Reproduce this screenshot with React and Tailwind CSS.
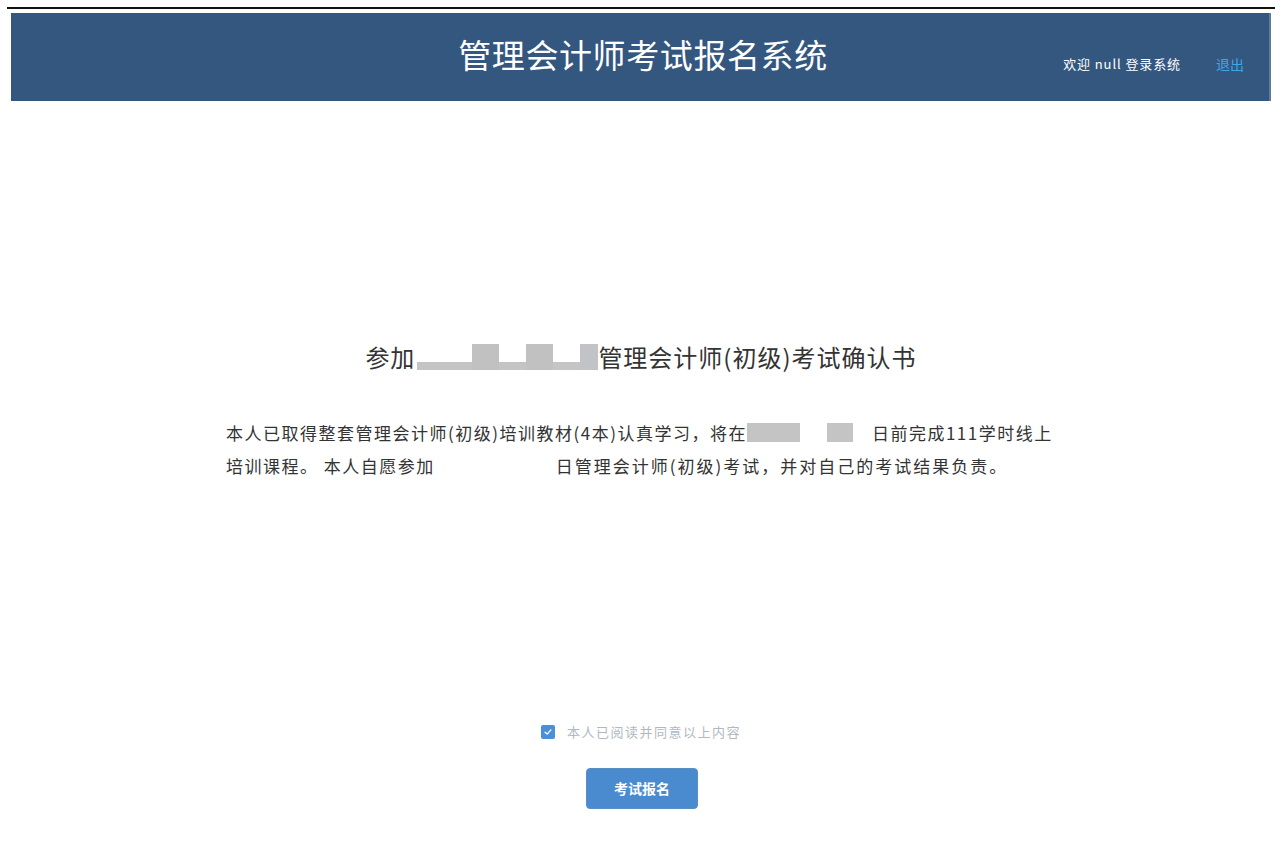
export default function App() {
  const font = { fontFamily: '"Noto Sans CJK SC", "Noto Sans", sans-serif' };
  return (
    <div className="min-h-[866px] bg-white px-[7px] pt-[7px]" style={font}>
      <div className="border-t-2 border-[#111]" />
      <header className="mx-[4px] mt-[4px] flex h-[88px] items-center bg-[#33577f] pb-[6px] border-r-2 border-[#5f7a98]">
        <div className="relative flex w-full items-center justify-center">
          <h1 className="ml-[6px] text-[33px] leading-none font-normal text-white tracking-[0.6px]">管理会计师考试报名系统</h1>
          <div className="absolute right-[25px] top-[16px] flex items-center text-[13px] text-white">
            <span className="tracking-[0.9px]">欢迎 null 登录系统</span>
            <a className="ml-[35px] text-[14px] text-[#3ea6e8]">退出</a>
          </div>
        </div>
      </header>

      <main className="mx-auto w-[830px]">
        <h2 className="mt-[240px] flex items-center justify-center text-[24px] leading-[32px] text-[#333] font-normal tracking-[1px]">
          <span>参加</span>
          <span className="ml-[2px] flex h-[26px] items-end">
            <span className="h-[8px] w-[55px] bg-[#c4c4c4]" />
            <span className="h-[26px] w-[27px] bg-[#c1c1c1]" />
            <span className="h-[8px] w-[27px] bg-[#c2c5c4]" />
            <span className="h-[26px] w-[27px] bg-[#c0c1c0]" />
            <span className="h-[8px] w-[27px] bg-[#c6c4c6]" />
            <span className="h-[26px] w-[18px] bg-[#c1c3c6]" />
          </span>
          <span>管理会计师(初级)考试确认书</span>
        </h2>

        <div className="mt-[43px] text-[17px] leading-[33px] text-[#333] tracking-[1.5px]">
          <div className="flex items-center">
            <span>本人已取得整套管理会计师(初级)培训教材(4本)认真学习，将在</span>
            <span className="flex h-[19px] items-center">
              <span className="h-[19px] w-[53px] bg-[#c4c4c4]" />
              <span className="w-[27px]" />
              <span className="h-[19px] w-[26px] bg-[#c4c4c4]" />
              <span className="w-[19px]" />
            </span>
            <span>日前完成111学时线上</span>
          </div>
          <div className="flex items-center">
            <span>培训课程。 本人自愿参加</span>
            <span className="w-[121px]" />
            <span className="tracking-[2px]">日管理会计师(初级)考试，并对自己的考试结果负责。</span>
          </div>
        </div>

        <div className="mt-[240px] flex items-center justify-center">
          <span className="flex h-[14px] w-[14px] items-center justify-center rounded-[2px] bg-[#4a90d9]">
            <svg viewBox="0 0 12 12" className="h-[10px] w-[10px]" fill="none" stroke="#ffffff" strokeWidth="1.6" strokeLinecap="round" strokeLinejoin="round">
              <path d="M2.5 6.2 L5 8.5 L9.5 3.5" />
            </svg>
          </span>
          <span className="ml-[12px] text-[13px] tracking-[1.5px] text-[#b0b8c2]">本人已阅读并同意以上内容</span>
        </div>

        <div className="mt-[26px] flex justify-center">
          <button className="ml-[2px] h-[41px] w-[112px] rounded-[4px] border border-[#5a8fc4] bg-[#4a8bcf] text-[14px] font-bold text-white">
            考试报名
          </button>
        </div>
      </main>
    </div>
  );
}
